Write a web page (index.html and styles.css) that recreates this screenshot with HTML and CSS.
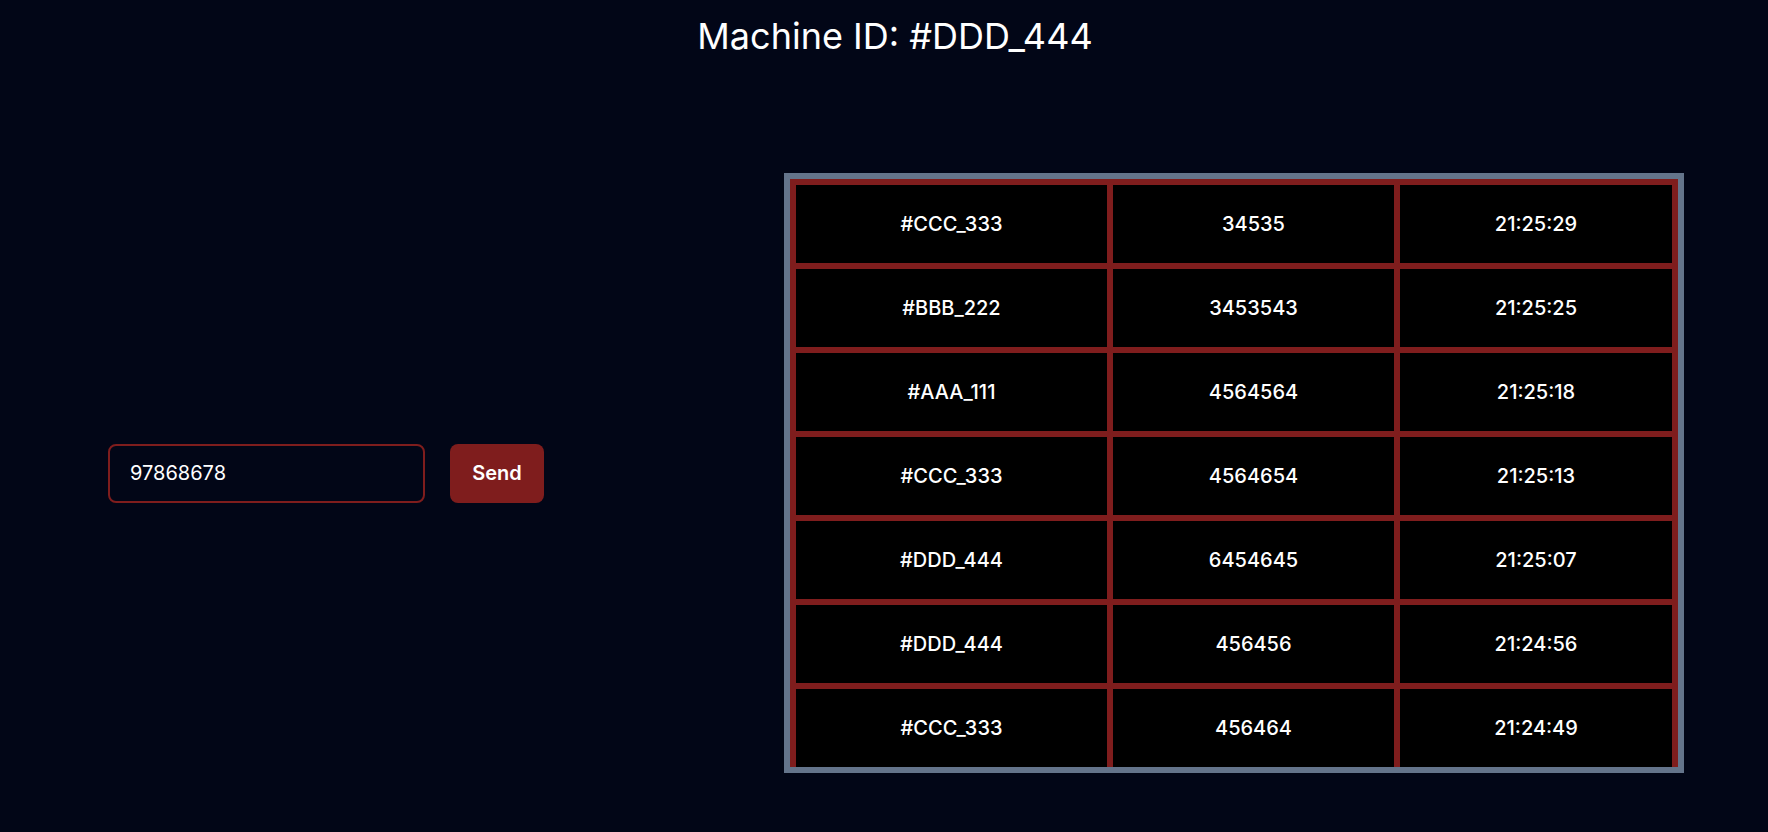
FILE: index.html
```html
<!DOCTYPE html>
<html lang="en">
<head>
<meta charset="utf-8">
<title>Machine</title>
<link rel="stylesheet" href="styles.css">
</head>
<body>
<h1 class="title">Machine ID: #DDD_444</h1>
<main class="content">
  <form class="send-form">
    <input class="value-input" type="text" value="97868678">
    <button class="send-btn" type="button">Send</button>
  </form>
  <div class="table-frame">
    <div class="table-grid">
      <div class="cell">#CCC_333</div><div class="cell">34535</div><div class="cell">21:25:29</div>
      <div class="cell">#BBB_222</div><div class="cell">3453543</div><div class="cell">21:25:25</div>
      <div class="cell">#AAA_111</div><div class="cell">4564564</div><div class="cell">21:25:18</div>
      <div class="cell">#CCC_333</div><div class="cell">4564654</div><div class="cell">21:25:13</div>
      <div class="cell">#DDD_444</div><div class="cell">6454645</div><div class="cell">21:25:07</div>
      <div class="cell">#DDD_444</div><div class="cell">456456</div><div class="cell">21:24:56</div>
      <div class="cell">#CCC_333</div><div class="cell">456464</div><div class="cell">21:24:49</div>
    </div>
  </div>
</main>
</body>
</html>
```

FILE: styles.css
```css
* { box-sizing: border-box; }
html, body {
  margin: 0;
  padding: 0;
  background: #020617;
  color: #ffffff;
  font-family: Inter, "Noto Sans", sans-serif;
  height: 100%;
  overflow: hidden;
}
.title {
  margin: 16px 0 0 22px;
  font-size: 36px;
  line-height: 40px;
  font-weight: 400;
  text-align: center;
}
.content {
  display: flex;
  align-items: center;
  gap: 240px;
  padding-left: 108px;
  margin-top: 117px;
}
.send-form {
  display: flex;
  align-items: center;
  gap: 25px;
}
.value-input {
  width: 317px;
  height: 59px;
  border: 2px solid #7f1d1d;
  border-radius: 8px;
  background: #020617;
  color: #ffffff;
  font-family: Inter, sans-serif;
  font-size: 20px;
  padding: 0 20px;
  outline: none;
}
.send-btn {
  height: 59px;
  width: 94px;
  border: none;
  border-radius: 8px;
  background: #7f1d1d;
  color: #ffffff;
  font-family: Inter, sans-serif;
  font-size: 20px;
  font-weight: 600;
  padding: 0;
}
.table-frame {
  border: 6px solid #64748b;
  width: 900px;
}
.table-grid {
  display: grid;
  grid-template-columns: 311px 281px 272px;
  grid-auto-rows: 78px;
  gap: 6px;
  padding: 6px 6px 0 6px;
  background: #7f1d1d;
}
.cell {
  background: #000000;
  display: flex;
  align-items: center;
  justify-content: center;
  font-size: 20px;
  font-weight: 500;
}
```
